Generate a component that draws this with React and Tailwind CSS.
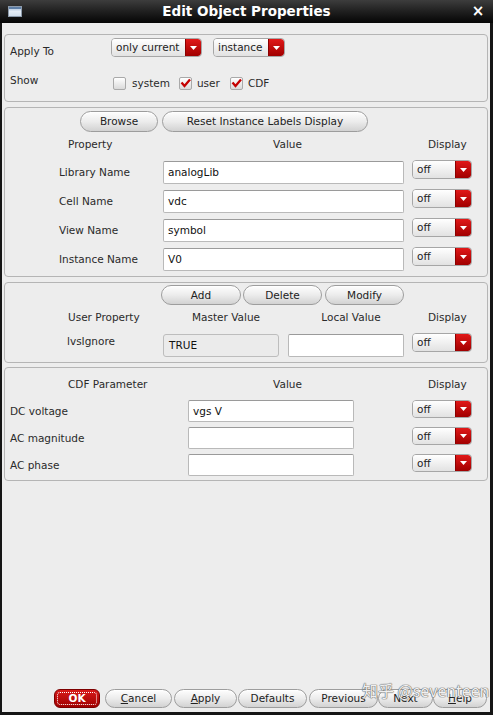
import React from "react";

function Btn({ children, className }) {
  return (
    <div
      className={
        "flex items-center justify-center rounded-full border border-[#9d9d9d] bg-linear-to-b from-[#fefefe] via-[#ececec] to-[#d2d2d2] text-[#222] shadow-[inset_0_1px_0_#fff] " +
        className
      }
    >
      {children}
    </div>
  );
}

function Drop({ label, className }) {
  return (
    <div className={"flex rounded-[4px] border border-[#a6a6a6] overflow-hidden " + className}>
      <div className="flex-1 flex items-center pl-[4px] bg-linear-to-b from-white to-[#e2e2e2] text-[#222]">
        {label}
      </div>
      <div className="w-[16px] flex items-center justify-center rounded-r-[3px] bg-linear-to-b from-[#e11818] to-[#a10000] border-l border-[#8a0000]">
        <svg width="7" height="4" viewBox="0 0 7 4">
          <path d="M0 0h7L3.5 4z" fill="#fff" />
        </svg>
      </div>
    </div>
  );
}

function Check({ checked }) {
  return (
    <div className="w-[13px] h-[13px] rounded-[2px] border border-[#a9a9a9] bg-linear-to-b from-white to-[#dadada] flex items-center justify-center">
      {checked && (
        <svg width="11" height="10" viewBox="0 0 11 10">
          <path d="M1.5 4.5 L4.5 8 L10 1.5" stroke="#c40000" strokeWidth="2.3" fill="none" />
        </svg>
      )}
    </div>
  );
}

function Field({ value, className }) {
  return (
    <div
      className={
        "flex items-center pl-[4px] bg-white border border-[#b9b9b9] border-t-[#9a9a9a] rounded-[2px] text-[#111] " +
        className
      }
    >
      {value}
    </div>
  );
}

export default function App() {
  return (
    <div className="relative w-[493px] h-[715px] bg-[#151515] flex flex-col font-['DejaVu_Sans','Noto_Sans',sans-serif] text-[10.5px] leading-[13px] text-[#2a2a2a] overflow-hidden">
      {/* Title bar */}
      <div className="h-[23px] flex items-center bg-linear-to-b from-[#3d3d3d] to-[#060606]">
        <div className="w-[30px] flex justify-center">
          <div className="w-[14px] h-[11px] border border-[#8d9bab] bg-linear-to-b from-[#9fb8d6] via-[#e6eef7] to-[#d3e0ee] flex flex-col">
            <div className="h-[2px] bg-[#5d7ea6]" />
          </div>
        </div>
        <div className="flex-1 text-center text-white font-bold text-[13.5px] leading-[23px]">
          Edit Object Properties
        </div>
        <div className="w-[30px] flex justify-center text-white font-bold text-[15px] leading-[23px]">×</div>
      </div>

      {/* Body */}
      <div className="flex-1 ml-[2px] mr-[3px] mb-[3px] bg-[#ededed] flex flex-col px-[2px]">
        {/* Section 1 */}
        <div className="mt-[11px] h-[68px] border border-[#b5b5b5] rounded-[4px] flex flex-col">
          <div className="mt-[3px] h-[19px] flex items-start">
            <div className="w-[106px] pl-[5px] pt-[7px]">Apply To</div>
            <Drop label="only current" className="w-[91px] h-[19px]" />
            <Drop label="instance" className="ml-[11px] w-[72px] h-[19px]" />
          </div>
          <div className="mt-[18px] h-[16px] flex items-center">
            <div className="w-[106px] pl-[5px] -mt-[5px]">Show</div>
            <div className="ml-[2px] flex items-center">
              <Check />
              <span className="ml-[6px]">system</span>
              <div className="ml-[9px]">
                <Check checked />
              </div>
              <span className="ml-[5px]">user</span>
              <div className="ml-[10px]">
                <Check checked />
              </div>
              <span className="ml-[5px]">CDF</span>
            </div>
          </div>
        </div>

        {/* Section 2 */}
        <div className="mt-[5px] h-[170px] border border-[#b5b5b5] rounded-[4px] flex flex-col">
          <div className="mt-[3px] h-[21px] flex pl-[75px]">
            <Btn className="w-[78px] h-[21px]">Browse</Btn>
            <Btn className="ml-[4px] w-[206px] h-[21px]">Reset Instance Labels Display</Btn>
          </div>
          <div className="mt-[3px] h-[18px] flex items-center">
            <div className="w-[158px] pl-[63px]">Property</div>
            <div className="w-[249px] text-center">Value</div>
            <div className="pl-[16px]">Display</div>
          </div>
          <div className="mt-[6px] flex flex-col">
            {[
              ["Library Name", "analogLib"],
              ["Cell Name", "vdc"],
              ["View Name", "symbol"],
              ["Instance Name", "V0"],
            ].map(([l, v]) => (
              <div key={l} className="h-[29px] flex items-start">
                <div className="w-[158px] pl-[54px] h-[23px] mt-[2px] flex items-center">{l}</div>
                <Field value={v} className="w-[241px] h-[23px] mt-[2px]" />
                <Drop label="off" className="ml-[8px] mt-[1px] w-[60px] h-[19px]" />
              </div>
            ))}
          </div>
        </div>

        {/* Section 3 */}
        <div className="mt-[5px] h-[81px] border border-[#b5b5b5] rounded-[4px] flex flex-col">
          <div className="mt-[2px] h-[20px] flex pl-[156px]">
            <Btn className="w-[80px] h-[20px]">Add</Btn>
            <Btn className="ml-[2px] w-[79px] h-[20px]">Delete</Btn>
            <Btn className="ml-[3px] w-[79px] h-[20px]">Modify</Btn>
          </div>
          <div className="mt-[3px] h-[18px] flex items-center">
            <div className="w-[158px] pl-[63px]">User Property</div>
            <div className="w-[126px] text-center">Master Value</div>
            <div className="w-[124px] text-center">Local Value</div>
            <div className="pl-[15px]">Display</div>
          </div>
          <div className="mt-[5px] h-[28px] flex items-start">
            <div className="w-[158px] pl-[62px] h-[18px] mt-[1px] flex items-center">lvsIgnore</div>
            <div className="w-[116px] h-[23px] mt-[3px] flex items-center pl-[5px] bg-[#ebebeb] border border-[#bdbdbd] rounded-[3px] text-[#111]">
              TRUE
            </div>
            <Field value="" className="ml-[9px] w-[116px] h-[23px] mt-[3px]" />
            <Drop label="off" className="ml-[8px] mt-[2px] w-[60px] h-[19px]" />
          </div>
        </div>

        {/* Section 4 */}
        <div className="mt-[4px] h-[114px] border border-[#b5b5b5] rounded-[4px] flex flex-col">
          <div className="mt-[7px] h-[18px] flex items-center">
            <div className="w-[158px] pl-[63px]">CDF Parameter</div>
            <div className="w-[249px] text-center">Value</div>
            <div className="pl-[16px]">Display</div>
          </div>
          <div className="mt-[6px] flex flex-col">
            {[
              ["DC voltage", "vgs V"],
              ["AC magnitude", ""],
              ["AC phase", ""],
            ].map(([l, v]) => (
              <div key={l} className="h-[27px] flex items-start">
                <div className="w-[183px] pl-[5px] h-[22px] mt-[1px] flex items-center">{l}</div>
                <Field value={v} className="w-[166px] h-[22px] mt-[1px]" />
                <Drop label="off" className="ml-[58px] mt-[1px] w-[60px] h-[18px]" />
              </div>
            ))}
          </div>
        </div>

        <div className="flex-1" />

        {/* Bottom buttons */}
        <div className="h-[19px] mb-[4px] flex pl-[50px]">
          <div className="w-[46px] h-[19px] rounded-[6px] bg-linear-to-b from-[#d81a1a] to-[#a00000] border border-[#7d0000] p-[2px]">
            <div className="w-full h-full border border-dotted border-white rounded-[3px] flex items-center justify-center text-white font-bold">
              OK
            </div>
          </div>
          <Btn className="ml-[5px] w-[67px] h-[19px]">
            <span className="underline">C</span>ancel
          </Btn>
          <Btn className="ml-[2px] w-[63px] h-[19px]">
            <span className="underline">A</span>pply
          </Btn>
          <Btn className="ml-[1px] w-[69px] h-[19px]">Defaults</Btn>
          <Btn className="ml-[2px] w-[69px] h-[19px]">Previous</Btn>
          <Btn className="w-[55px] h-[19px]">Next</Btn>
          <Btn className="w-[54px] h-[19px]">
            <span className="underline">H</span>elp
          </Btn>
        </div>
      </div>

      {/* Watermark overlay */}
      <div className="absolute left-[362px] top-[679px] text-[16px] leading-[22px] text-white/90 font-['Noto_Sans_CJK_SC','DejaVu_Sans',sans-serif] [text-shadow:0_0_1px_#666,0_0_1px_#666,0_0_1px_#666] pointer-events-none">
        知乎 @seventeen
      </div>
    </div>
  );
}
